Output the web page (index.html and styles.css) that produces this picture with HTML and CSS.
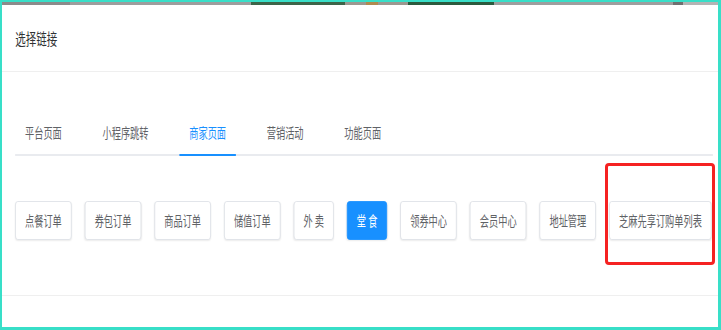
FILE: index.html
```html
<!DOCTYPE html>
<html lang="zh-CN">
<head>
  <meta charset="UTF-8">
  <meta name="viewport" content="width=device-width, initial-scale=1.0">
  <link rel="stylesheet" href="styles.css">
  <title>选择链接</title>
</head>
<body>
  <div class="frame">
    <div class="top-strip"></div>
    <div class="dialog">
      <div class="dialog-header">选择链接</div>
      <div class="dialog-body">
        <div class="tabs">
          <div class="tab">平台页面</div>
          <div class="tab">小程序跳转</div>
          <div class="tab active">商家页面</div>
          <div class="tab">营销活动</div>
          <div class="tab">功能页面</div>
        </div>
        <div class="link-list">
          <button type="button" class="link-btn">点餐订单</button>
          <button type="button" class="link-btn">券包订单</button>
          <button type="button" class="link-btn">商品订单</button>
          <button type="button" class="link-btn">储值订单</button>
          <button type="button" class="link-btn">外 卖</button>
          <button type="button" class="link-btn active">堂 食</button>
          <button type="button" class="link-btn">领券中心</button>
          <button type="button" class="link-btn">会员中心</button>
          <button type="button" class="link-btn">地址管理</button>
          <button type="button" class="link-btn">芝麻先享订购单列表</button>
        </div>
      </div>
    </div>
    <div class="highlight"></div>
  </div>
</body>
</html>
```

FILE: styles.css
```css
body {
  margin: 0;
  background-color: #ffffff;
  font-family: "Noto Sans CJK SC", "Noto Sans", sans-serif;
}
.frame {
  position: relative;
  width: 721px;
  height: 330px;
  box-sizing: border-box;
  border-style: solid;
  border-color: #38dfc8;
  border-width: 2px 3px 3px 2px;
  overflow: hidden;
  background-color: #ffffff;
}
.top-strip {
  height: 3px;
  background: linear-gradient(to right,
    #8b8b8b 0 68px, #9d9d9d 68px 249px, #3d6449 249px 343px,
    #9c9890 343px 364px, #b08a50 364px 376px, #9c9890 376px 406px,
    #2c5a3e 406px 492px, #9e9e9e 492px 671px, #707070 671px 681px,
    #b4b4b4 681px);
}
/* screenshot is squeezed horizontally, so the dialog is too */
.dialog {
  width: 1090px;
  transform: scaleX(0.657);
  transform-origin: 0 0;
}
.dialog-header {
  height: 67px;
  box-sizing: border-box;
  display: flex;
  align-items: center;
  padding-left: 20px;
  font-size: 16px;
  color: #303133;
  border-bottom: 1px solid #efefef;
}
.dialog-body {
  height: 224px;
  box-sizing: border-box;
  padding: 38px 8px 0 20px;
  border-bottom: 1px solid #efefef;
}
.tabs {
  display: flex;
  border-bottom: 2px solid #e9ebef;
}
.tab {
  height: 44px;
  line-height: 44px;
  padding: 0 15px;
  margin-right: 32px;
  margin-bottom: -2px;
  font-size: 14px;
  color: #606266;
  border-bottom: 2px solid transparent;
}
.tab.active {
  color: #1890ff;
  border-bottom-color: #1890ff;
}
.link-list {
  display: flex;
  flex-wrap: nowrap;
  gap: 20px;
  margin-top: 45px;
}
.link-btn {
  flex: none;
  height: 39px;
  padding: 0 14px;
  border: 1px solid #dcdfe6;
  border-radius: 4px;
  background-color: #ffffff;
  box-shadow: 0 1px 2px rgba(0, 0, 0, 0.08);
  font-family: inherit;
  font-size: 14px;
  line-height: 37px;
  color: #606266;
  white-space: nowrap;
}
.link-btn.active {
  background-color: #1890ff;
  border-color: #1890ff;
  color: #ffffff;
}
.highlight {
  position: absolute;
  left: 603px;
  top: 161px;
  width: 110px;
  height: 102px;
  box-sizing: border-box;
  border: 3px solid #f52222;
  border-radius: 4px;
}
```
